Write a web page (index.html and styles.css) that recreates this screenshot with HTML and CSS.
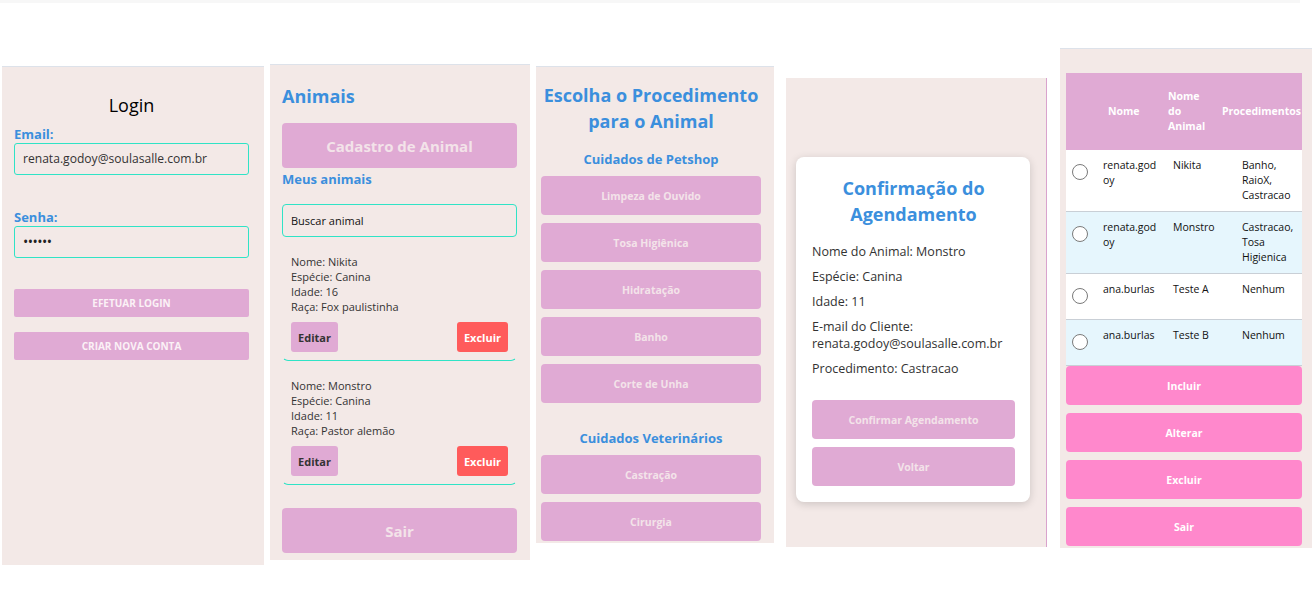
FILE: index.html
```html
<!DOCTYPE html>
<html lang="pt-BR">
<head>
<meta charset="utf-8">
<title>Petshop</title>
<link rel="stylesheet" href="styles.css">
</head>
<body>
<div class="topstrip"></div>
<main class="screens">
  <section class="panel p-login">
    <h2 class="login-title">Login</h2>
    <div class="lbl">Email:</div>
    <div class="field">renata.godoy@soulasalle.com.br</div>
    <div class="lbl lbl-senha">Senha:</div>
    <div class="field field-pass">••••••</div>
    <button class="btn-login">EFETUAR LOGIN</button>
    <button class="btn-login btn-login2">CRIAR NOVA CONTA</button>
  </section>

  <section class="panel p-animais">
    <h2 class="title-left">Animais</h2>
    <button class="btn-big">Cadastro de Animal</button>
    <h3 class="sub-left">Meus animais</h3>
    <div class="search">Buscar animal</div>
    <div class="card">
      <div class="card-text">
        <div>Nome: Nikita</div>
        <div>Espécie: Canina</div>
        <div>Idade: 16</div>
        <div>Raça: Fox paulistinha</div>
      </div>
      <div class="card-actions">
        <button class="btn-edit">Editar</button>
        <button class="btn-del">Excluir</button>
      </div>
    </div>
    <div class="card">
      <div class="card-text">
        <div>Nome: Monstro</div>
        <div>Espécie: Canina</div>
        <div>Idade: 11</div>
        <div>Raça: Pastor alemão</div>
      </div>
      <div class="card-actions">
        <button class="btn-edit">Editar</button>
        <button class="btn-del">Excluir</button>
      </div>
    </div>
    <button class="btn-big btn-sair">Sair</button>
  </section>

  <section class="panel p-proc">
    <h2 class="title-center">Escolha o Procedimento para o Animal</h2>
    <h3 class="sub-center">Cuidados de Petshop</h3>
    <div class="btn-list">
      <button class="btn-proc">Limpeza de Ouvido</button>
      <button class="btn-proc">Tosa Higiênica</button>
      <button class="btn-proc">Hidratação</button>
      <button class="btn-proc">Banho</button>
      <button class="btn-proc">Corte de Unha</button>
    </div>
    <h3 class="sub-center sub-vet">Cuidados Veterinários</h3>
    <div class="btn-list">
      <button class="btn-proc">Castração</button>
      <button class="btn-proc">Cirurgia</button>
    </div>
  </section>

  <section class="panel p-confirm">
    <div class="confirm-card">
      <h2 class="title-center confirm-title">Confirmação do Agendamento</h2>
      <p class="info">Nome do Animal: Monstro</p>
      <p class="info">Espécie: Canina</p>
      <p class="info">Idade: 11</p>
      <p class="info">E-mail do Cliente:<br>renata.godoy@soulasalle.com.br</p>
      <p class="info">Procedimento: Castracao</p>
      <div class="btn-list confirm-btns">
        <button class="btn-proc">Confirmar Agendamento</button>
        <button class="btn-proc">Voltar</button>
      </div>
    </div>
  </section>

  <section class="panel p-table">
    <div class="tbl">
      <div class="thead">
        <div></div>
        <div class="th th-nome">Nome</div>
        <div class="th th-animal">Nome do Animal</div>
        <div class="th th-proc">Procedimentos</div>
      </div>
      <div class="tr">
        <div class="td-radio"><span class="radio"></span></div>
        <div class="td td-user">renata.godoy</div>
        <div class="td">Nikita</div>
        <div class="td td-proc">Banho, RaioX, Castracao</div>
      </div>
      <div class="tr alt">
        <div class="td-radio"><span class="radio"></span></div>
        <div class="td td-user">renata.godoy</div>
        <div class="td">Monstro</div>
        <div class="td td-proc">Castracao, Tosa Higienica</div>
      </div>
      <div class="tr">
        <div class="td-radio"><span class="radio"></span></div>
        <div class="td td-user">ana.burlas</div>
        <div class="td">Teste A</div>
        <div class="td td-proc">Nenhum</div>
      </div>
      <div class="tr alt">
        <div class="td-radio"><span class="radio"></span></div>
        <div class="td td-user">ana.burlas</div>
        <div class="td">Teste B</div>
        <div class="td td-proc">Nenhum</div>
      </div>
    </div>
    <div class="btn-list tbl-btns">
      <button class="btn-hot">Incluir</button>
      <button class="btn-hot">Alterar</button>
      <button class="btn-hot">Excluir</button>
      <button class="btn-hot">Sair</button>
    </div>
  </section>
</main>
</body>
</html>
```

FILE: styles.css
```css
* { box-sizing: border-box; }

html, body {
  margin: 0;
  padding: 0;
  background: #ffffff;
  font-family: "Open Sans", "Noto Sans", sans-serif;
  color: #333;
}

h2, h3, p { margin: 0; }

button {
  font-family: inherit;
  border: none;
  cursor: pointer;
  display: block;
  padding: 0;
}

.topstrip {
  height: 3px;
  background: #f7f7f7;
  margin-right: 12px;
}

.screens {
  display: flex;
  align-items: flex-start;
}

.panel {
  background: #f3e9e7;
  border-top: 1px solid #dde2ea;
}

/* ---------- Login ---------- */
.p-login {
  margin-left: 2px;
  margin-top: 63px;
  width: 262px;
  height: 499px;
  padding: 26px 15px 0 12px;
}

.login-title {
  font-size: 18px;
  font-weight: 400;
  line-height: 24px;
  text-align: center;
  color: #000;
}

.lbl {
  margin-top: 8px;
  font-size: 13px;
  font-weight: 700;
  line-height: 18px;
  color: #3b8fdd;
}

.lbl-senha { margin-top: 33px; }

.field {
  height: 32px;
  border: 1px solid #2fe3c6;
  border-radius: 3px;
  padding: 0 0 0 8px;
  font-size: 12.1px;
  line-height: 30px;
  color: #333;
}

.field-pass {
  font-size: 14px;
  letter-spacing: -0.5px;
  color: #222;
}

.btn-login {
  width: 100%;
  height: 28px;
  margin-top: 31px;
  background: #e0aad4;
  border-radius: 2px;
  color: #fbf1f6;
  font-size: 10px;
  font-weight: 700;
}

.btn-login2 { margin-top: 15px; }

/* ---------- Animais ---------- */
.p-animais {
  margin-left: 6px;
  margin-top: 61px;
  width: 260px;
  height: 496px;
  padding: 19px 13px 0 12px;
}

.title-left {
  font-size: 18px;
  font-weight: 700;
  line-height: 24px;
  color: #3b8fdd;
}

.btn-big {
  width: 100%;
  height: 45px;
  margin-top: 15px;
  background: #e0aad4;
  border-radius: 4px;
  color: #f3e3e9;
  font-size: 15px;
  font-weight: 700;
}

.sub-left {
  margin-top: 2px;
  font-size: 13px;
  font-weight: 700;
  line-height: 18px;
  color: #3b8fdd;
}

.search {
  margin-top: 16px;
  height: 33px;
  border: 1px solid #2fe3c6;
  border-radius: 4px;
  padding-left: 8px;
  font-size: 11px;
  line-height: 31px;
  color: #111;
}

.card {
  margin-top: 9px;
  padding: 7px 8px 8px;
  border: 1px solid transparent;
  border-bottom-color: #2fe3c6;
  border-radius: 0 0 6px 6px;
}

.card-text {
  font-size: 11px;
  line-height: 15px;
  color: #333;
}

.card-actions {
  margin-top: 8px;
  display: flex;
  justify-content: space-between;
}

.btn-edit {
  width: 47px;
  height: 30px;
  background: #e0aad4;
  border-radius: 3px;
  color: #333;
  font-size: 11px;
  font-weight: 700;
}

.btn-del {
  width: 51px;
  height: 30px;
  background: #ff5b5b;
  border-radius: 3px;
  color: #fff;
  font-size: 11px;
  font-weight: 700;
}

.btn-sair { margin-top: 23px; }

/* ---------- Procedimentos ---------- */
.p-proc {
  margin-left: 6px;
  margin-top: 63px;
  width: 238px;
  height: 477px;
  padding: 15px 13px 0 5px;
}

.title-center {
  font-size: 18px;
  font-weight: 700;
  line-height: 26px;
  text-align: center;
  color: #3b8fdd;
}

.sub-center {
  margin-top: 16px;
  font-size: 13px;
  font-weight: 700;
  line-height: 18px;
  text-align: center;
  color: #3b8fdd;
}

.sub-vet { margin-top: 26px; }

.btn-list {
  margin-top: 8px;
  display: flex;
  flex-direction: column;
  gap: 8px;
}

.btn-proc {
  width: 100%;
  height: 39px;
  background: #e0aad4;
  border-radius: 4px;
  color: #f3e3e9;
  font-size: 10.5px;
  font-weight: 700;
}

/* ---------- Confirmação ---------- */
.p-confirm {
  margin-left: 12px;
  margin-top: 75px;
  width: 261px;
  height: 469px;
  padding: 79px 16px 0 10px;
  border-top: none;
  border-right: 1px solid #d9a3cd;
}

.confirm-card {
  background: #fff;
  border-radius: 8px;
  box-shadow: 0 2px 8px rgba(0, 0, 0, 0.16);
  padding: 18px 15px 16px 16px;
}

.info {
  margin-top: 8px;
  font-size: 12.5px;
  line-height: 17px;
  color: #333;
}

.confirm-title + .info { margin-top: 16px; }

.confirm-btns { margin-top: 23px; }

/* ---------- Tabela ---------- */
.p-table {
  margin-left: 13px;
  margin-top: 45px;
  width: 252px;
  height: 500px;
  padding: 24px 10px 0 6px;
}

.tbl { background: #fff; }

.thead {
  display: grid;
  grid-template-columns: 32px 70px 54px 80px;
  height: 77px;
  background: #e0aad4;
  align-items: center;
}

.th {
  font-size: 10.5px;
  font-weight: 700;
  line-height: 15px;
  color: #fff;
}

.th-nome { padding-left: 10px; }
.th-animal { padding-right: 14px; }

.tr {
  display: grid;
  grid-template-columns: 32px 70px 69px 65px;
  border-top: 1px solid #c9cfd6;
  background: #fff;
}

.thead + .tr { border-top: none; }

.tr:last-child { border-bottom: 1px solid #c9cfd6; }

.tr.alt { background: #e6f6fd; }

.td-radio {
  padding: 14px 0 15px 6px;
}

.radio {
  display: block;
  width: 16px;
  height: 16px;
  border: 1px solid #7a7a7a;
  border-radius: 50%;
  background: #fff;
}

.td {
  padding: 8px 6px 8px 5px;
  font-size: 10.5px;
  line-height: 15px;
  color: #111;
}

.td-user { word-break: break-all; padding-right: 10px; }
.td-proc { padding-right: 4px; }

.tbl-btns { margin-top: 0; }

.btn-hot {
  width: 100%;
  height: 39px;
  background: #ff88cc;
  border-radius: 4px;
  color: #fff;
  font-size: 10.5px;
  font-weight: 700;
}
```
